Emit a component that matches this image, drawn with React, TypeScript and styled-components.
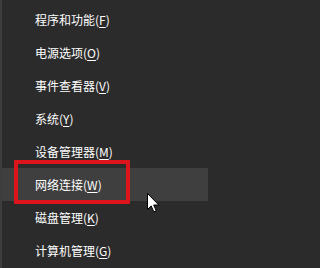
import * as React from 'react';
import styled, { createGlobalStyle } from 'styled-components';

const GlobalStyle = createGlobalStyle`
  html, body {
    margin: 0;
    padding: 0;
    background: #2b2b2b;
  }
`;

const Menu = styled.div`
  position: relative;
  display: flex;
  flex-direction: column;
  width: 206px;
  height: 265px;
  padding-top: 3px;
  background: #2b2b2b;
  border-left: 2px solid #3d3d3d;
  overflow: hidden;
  font-family: 'Noto Sans CJK SC', 'Noto Sans', sans-serif;
`;

const Item = styled.div<{ $active?: boolean }>`
  position: relative;
  display: flex;
  align-items: center;
  height: 33px;
  padding-left: 33px;
  font-size: 12px;
  color: #ffffff;
  background: ${(p) => (p.$active ? '#3f3f3f' : 'transparent')};
  white-space: nowrap;
`;

const Key = styled.span`
  text-decoration: underline;
  text-underline-offset: 2px;
  text-decoration-thickness: 1px;
`;

const RedFrame = styled.div`
  position: absolute;
  left: 12px;
  top: -8px;
  width: 108px;
  height: 36px;
  border: 4px solid #dc151c;
  border-radius: 1px;
  pointer-events: none;
`;

const Cursor = styled.svg`
  position: absolute;
  left: 145px;
  top: 193px;
  width: 13px;
  height: 20px;
`;

const items: { label: string; key: string }[] = [
  { label: '程序和功能', key: 'F' },
  { label: '电源选项', key: 'O' },
  { label: '事件查看器', key: 'V' },
  { label: '系统', key: 'Y' },
  { label: '设备管理器', key: 'M' },
  { label: '网络连接', key: 'W' },
  { label: '磁盘管理', key: 'K' },
  { label: '计算机管理', key: 'G' },
];

const App: React.FC = () => {
  return (
    <>
      <GlobalStyle />
      <Menu>
        {items.map((it) => {
          const active = it.key === 'W';
          return (
            <Item key={it.key} $active={active}>
              {it.label}(<Key>{it.key}</Key>)
              {active && <RedFrame />}
            </Item>
          );
        })}
        <Cursor viewBox="0 0 13 20">
          <path
            d="M0.5 0.5 L0.5 16.5 L4.2 12.9 L6.8 18.8 L9.2 17.8 L6.7 12 L11.8 12 Z"
            fill="#ffffff"
            stroke="#000000"
            strokeWidth="1"
            strokeLinejoin="miter"
          />
        </Cursor>
      </Menu>
    </>
  );
};

export default App;
